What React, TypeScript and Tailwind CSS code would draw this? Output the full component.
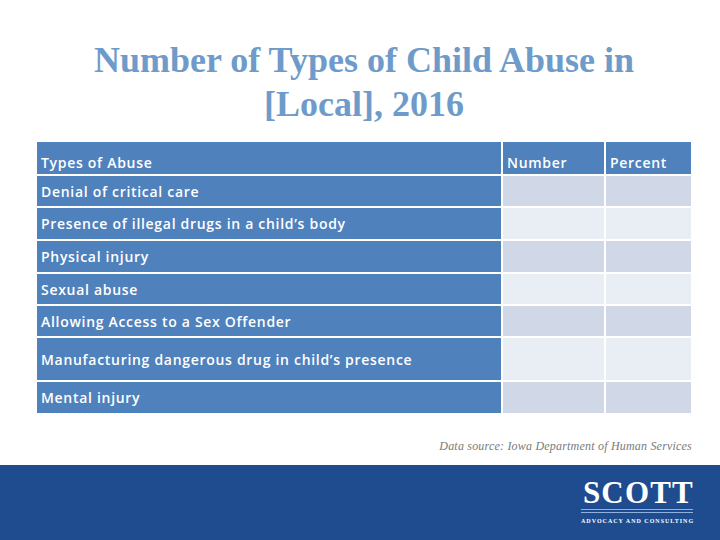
const rows = [
  { label: 'Denial of critical care', h: 'h-[30px]', shade: 'bg-[#d0d8e8]' },
  { label: 'Presence of illegal drugs in a child’s body', h: 'h-[31px]', shade: 'bg-[#e9edf4]' },
  { label: 'Physical injury', h: 'h-[31px]', shade: 'bg-[#d0d8e8]' },
  { label: 'Sexual abuse', h: 'h-[30px]', shade: 'bg-[#e9edf4]' },
  { label: 'Allowing Access to a Sex Offender', h: 'h-[30px]', shade: 'bg-[#d0d8e8]' },
  { label: 'Manufacturing dangerous drug in child’s presence', h: 'h-[42px]', shade: 'bg-[#e9edf4]' },
  { label: 'Mental injury', h: 'h-[31px]', shade: 'bg-[#d0d8e8]' },
];

const cellText = "font-['Open_Sans',sans-serif] font-semibold text-[14px] tracking-[0.7px] text-white";

export default function App() {
  return (
    <div className="w-[720px] h-[540px] bg-white flex flex-col overflow-hidden">
      {/* title */}
      <div className="pt-[38px] pl-[37px] pr-[29px]">
        <h1 className="text-center font-['Liberation_Serif',serif] font-bold text-[36px] leading-[44px] text-[#6e9bc9]">
          Number of Types of Child Abuse in
          <br />
          [Local], 2016
        </h1>
      </div>

      {/* table */}
      <div className="pl-[37px] mt-[16px]">
        <div className="grid grid-cols-[464px_101px_85px] gap-[2px] w-[654px]">
          <div className={`h-[32px] bg-[#4f81bd] flex items-end pl-[4px] pb-[1px] ${cellText}`}>Types of Abuse</div>
          <div className={`h-[32px] bg-[#4f81bd] flex items-end pl-[4px] pb-[1px] ${cellText}`}>Number</div>
          <div className={`h-[32px] bg-[#4f81bd] flex items-end pl-[4px] pb-[1px] ${cellText}`}>Percent</div>
          {rows.map(r => (
            <div key={r.label} className="contents">
              <div className={`${r.h} bg-[#4f81bd] flex items-center pl-[4px] ${cellText}`}>{r.label}</div>
              <div className={`${r.h} ${r.shade}`} />
              <div className={`${r.h} ${r.shade}`} />
            </div>
          ))}
        </div>
      </div>

      {/* source */}
      <div className="h-[52px] flex justify-end pr-[28px] pt-[25px]">
        <p className="font-['Liberation_Serif',serif] italic text-[12px] leading-[16px] tracking-[0.2px] text-[#7a7a7a]">
          Data source: Iowa Department of Human Services
        </p>
      </div>

      {/* footer band */}
      <div className="flex-1 bg-[#1f4b8f] border-t border-[#2c4a78] flex justify-end pr-[27px]">
        <div className="flex flex-col items-stretch w-[112px] pt-[11px]">
          <div className="text-right font-['Liberation_Serif',serif] font-bold text-[31px] leading-[32px] tracking-[1.2px] -mr-[1px] text-white">
            SCOTT
          </div>
          <div className="mt-0 h-px bg-[#8fb1df]" />
          <div className="mt-[2px] h-px bg-[#8fb1df]" />
          <div className="mt-[5px] text-right font-['Liberation_Serif',serif] font-bold text-[6px] leading-[7px] tracking-[1px] text-white whitespace-nowrap">
            ADVOCACY AND CONSULTING
          </div>
        </div>
      </div>
    </div>
  );
}
